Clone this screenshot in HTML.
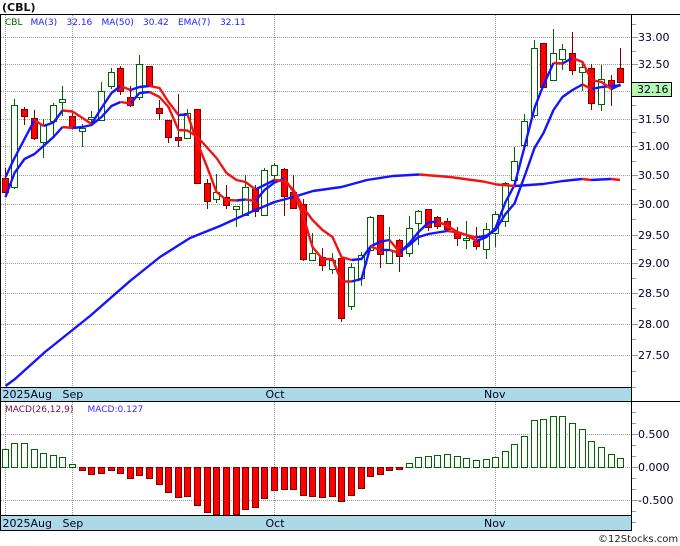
<!DOCTYPE html>
<html><head><meta charset="utf-8"><title>CBL</title>
<style>html,body{margin:0;padding:0;background:#fff;width:680px;height:546px;overflow:hidden}svg{display:block}text{font-family:"DejaVu Sans","Liberation Sans",sans-serif;fill:#00002a}</style></head>
<body>
<svg width="680" height="546" viewBox="0 0 680 546" xmlns="http://www.w3.org/2000/svg">
<rect width="680" height="546" fill="#fff"/>
<g shape-rendering="crispEdges">
<path fill="none" stroke="#999" stroke-dasharray="1 1" d="M1 37.5H632M1 64.5H632M1 91.5H632M1 119.5H632M1 146.5H632M1 175.5H632M1 204.5H632M1 235.5H632M1 263.5H632M1 293.5H632M1 324.5H632M1 355.5H632M1 434.5H632M1 467.5H632M1 500.5H632M5.5 15V387M72.5 15V387M274.5 15V387M495.5 15V387M5.5 402V515M72.5 402V515M274.5 402V515M495.5 402V515"/>
<!-- wicks -->
<path fill="none" stroke="#800000" d="M5.5 168V193M24.5 107V125M34.5 110V140M72.5 113V129M120.5 66V95M130.5 86V107M149.5 66V87M159.5 100V120M168.5 120V143M178.5 94V147M197.5 109V184M207.5 179V209M226.5 185V209M255.5 185V217M284.5 168V216M293.5 175V209M303.5 199V261M322.5 248V271M341.5 258V322M380.5 215V268M399.5 239V272M428.5 209V231M437.5 216V229M447.5 218V232M457.5 227V246M476.5 227V250M543.5 43V88M572.5 32V75M591.5 64V110M611.5 75V106M620.5 48V83"/>
<path fill="none" stroke="#006400" d="M14.5 99V189M43.5 119V158M53.5 103V136M62.5 86V116M82.5 124V147M91.5 111V125M101.5 82V121M111.5 68V89M139.5 55V100M187.5 109V138M216.5 174V203M236.5 206V227M245.5 175V215M264.5 168V215M274.5 163V183M312.5 233V260M332.5 253V274M351.5 263V310M361.5 252V286M370.5 216V250M389.5 227V263M409.5 216V257M418.5 210V245M466.5 221V249M486.5 223V259M495.5 211V247M505.5 182V227M514.5 147V183M524.5 114V147M534.5 40V118M553.5 29V80M562.5 44V70M582.5 61V91M601.5 65V111"/>
<!-- bodies -->
<path fill="#fff" stroke="#006400" d="M11.5 105.5H17.5V187.5H11.5ZM40.5 125.5H46.5V142.5H40.5ZM50.5 105.5H56.5V121.5H50.5ZM59.5 99.5H65.5V102.5H59.5ZM79.5 128.5H85.5V131.5H79.5ZM88.5 117.5H94.5V119.5H88.5ZM98.5 91.5H104.5V120.5H98.5ZM108.5 72.5H114.5V86.5H108.5ZM136.5 64.5H142.5V97.5H136.5ZM184.5 113.5H190.5V138.5H184.5ZM213.5 192.5H219.5V199.5H213.5ZM233.5 206.5H239.5V209.5H233.5ZM242.5 187.5H248.5V215.5H242.5ZM261.5 170.5H267.5V215.5H261.5ZM271.5 165.5H277.5V175.5H271.5ZM309.5 253.5H315.5V260.5H309.5ZM329.5 260.5H335.5V269.5H329.5ZM348.5 267.5H354.5V306.5H348.5ZM358.5 255.5H364.5V278.5H358.5ZM367.5 217.5H373.5V250.5H367.5ZM386.5 250.5H392.5V263.5H386.5ZM406.5 228.5H412.5V253.5H406.5ZM415.5 211.5H421.5V223.5H415.5ZM463.5 238.5H469.5V240.5H463.5ZM483.5 229.5H489.5V249.5H483.5ZM492.5 214.5H498.5V233.5H492.5ZM502.5 183.5H508.5V221.5H502.5ZM511.5 161.5H517.5V180.5H511.5ZM521.5 121.5H527.5V145.5H521.5ZM531.5 48.5H537.5V115.5H531.5ZM550.5 53.5H556.5V80.5H550.5ZM559.5 49.5H565.5V59.5H559.5ZM579.5 67.5H585.5V72.5H579.5ZM598.5 79.5H604.5V104.5H598.5Z"/>
<path fill="#f00" stroke="#800000" d="M2.5 178.5H8.5V192.5H2.5ZM21.5 109.5H27.5V116.5H21.5ZM31.5 118.5H37.5V138.5H31.5ZM69.5 116.5H75.5V128.5H69.5ZM117.5 68.5H123.5V91.5H117.5ZM127.5 97.5H133.5V105.5H127.5ZM146.5 66.5H152.5V86.5H146.5ZM156.5 108.5H162.5V113.5H156.5ZM165.5 120.5H171.5V137.5H165.5ZM175.5 137.5H181.5V140.5H175.5ZM194.5 109.5H200.5V183.5H194.5ZM204.5 183.5H210.5V201.5H204.5ZM223.5 197.5H229.5V205.5H223.5ZM252.5 189.5H258.5V211.5H252.5ZM281.5 169.5H287.5V196.5H281.5ZM290.5 192.5H296.5V208.5H290.5ZM300.5 204.5H306.5V259.5H300.5ZM319.5 257.5H325.5V265.5H319.5ZM338.5 258.5H344.5V318.5H338.5ZM377.5 215.5H383.5V254.5H377.5ZM396.5 240.5H402.5V256.5H396.5ZM425.5 209.5H431.5V227.5H425.5ZM434.5 217.5H440.5V226.5H434.5ZM444.5 221.5H450.5V229.5H444.5ZM454.5 232.5H460.5V238.5H454.5ZM473.5 241.5H479.5V246.5H473.5ZM540.5 43.5H546.5V87.5H540.5ZM569.5 53.5H575.5V70.5H569.5ZM588.5 68.5H594.5V103.5H588.5ZM608.5 80.5H614.5V86.5H608.5ZM617.5 68.5H623.5V82.5H617.5Z"/>
</g>
<!-- moving averages -->
<g fill="none" stroke-width="2.4" stroke-linejoin="round">
<g stroke="#1414ff">
<polyline points="5.5,386 15,379 45,352 90,316 130,281 160,257 190,238 220,226 236.5,218.5 255.5,210 274.5,202 293.5,197 313,191 341.5,187 367,180 393,176 419,174.5"/>
<polyline points="515,186 543,184 563,181 582,179"/>
<polyline points="591,180 611,179"/>
<!-- fast -->
<polyline points="5.5,177 14.5,158 24.5,139 34.5,120"/>
<polyline points="43.5,126 53.5,122.5 62.5,110.5"/>
<polyline points="91.5,124 101.5,108 111.5,93 120.5,86"/>
<polyline points="130.5,90 139.5,87 149.5,86"/>
<polyline points="178.5,115 187.5,114.5"/>
<polyline points="236.5,200.5 245.5,199.5"/>
<polyline points="255.5,201 264.5,190 274.5,182.5 284.5,178.5"/>
<polyline points="351.5,281.5 361.5,279 370.5,246.5"/>
<polyline points="380.5,250 389.5,250"/>
<polyline points="399.5,253 409.5,243 418.5,232 428.5,222.5 437.5,221.5"/>
<polyline points="476.5,241 486.5,237 495.5,228 505.5,202 514.5,185 524.5,147 534.5,108 543.5,85 553.5,63"/>
<polyline points="562.5,63.5 572.5,58"/>
<polyline points="611.5,89 620.5,84.5"/>
<!-- slow -->
<polyline points="5.5,197 14.5,173 24.5,159 34.5,154 43.5,146 53.5,137 62.5,127"/>
<polyline points="72.5,128 82.5,127 91.5,125 101.5,117 111.5,106 120.5,102"/>
<polyline points="130.5,103.5 139.5,93 149.5,92"/>
<polyline points="255.5,189.5 264.5,185 274.5,180"/>
<polyline points="351.5,260 361.5,259 370.5,246.5 380.5,241.5 389.5,240"/>
<polyline points="399.5,252 409.5,245 418.5,237 428.5,234 437.5,232.5 447.5,231"/>
<polyline points="476.5,237.5 486.5,235.5 495.5,230 505.5,214 514.5,203.5 524.5,176.5 534.5,148 543.5,133 553.5,110 562.5,97 572.5,90 582.5,84.5"/>
<polyline points="591.5,89 601.5,87 611.5,86 620.5,85.5"/>
</g>
<g stroke="#f01414">
<polyline points="419,174.5 450,177 483,181.5 497,184.5 515,186"/>
<polyline points="582,179 591,180"/>
<polyline points="611,179 620,180"/>
<!-- fast -->
<polyline points="34.5,120 43.5,126"/>
<polyline points="62.5,110.5 72.5,111.5 82.5,118 91.5,124"/>
<polyline points="120.5,86 130.5,90"/>
<polyline points="149.5,86 159.5,88 168.5,102 178.5,115"/>
<polyline points="187.5,114.5 197.5,143 207.5,168 216.5,192 226.5,200 236.5,200.5"/>
<polyline points="245.5,199.5 255.5,201"/>
<polyline points="284.5,178.5 293.5,192 303.5,217 312.5,247 322.5,259 332.5,259 341.5,281.5 351.5,281.5"/>
<polyline points="370.5,246.5 380.5,250"/>
<polyline points="389.5,250 399.5,253"/>
<polyline points="437.5,221.5 447.5,226 457.5,232 466.5,235 476.5,241"/>
<polyline points="553.5,63 562.5,63.5"/>
<polyline points="572.5,58 582.5,62 591.5,80 601.5,82 611.5,89"/>
<!-- slow -->
<polyline points="62.5,127 72.5,128"/>
<polyline points="120.5,102 130.5,103.5"/>
<polyline points="149.5,92 159.5,97 168.5,107 178.5,130 187.5,130.5 197.5,137 207.5,148 216.5,158 226.5,173 236.5,180 245.5,182 255.5,189.5"/>
<polyline points="274.5,180 284.5,181 293.5,190 303.5,208 312.5,220 322.5,230 332.5,237 341.5,257 351.5,260"/>
<polyline points="389.5,240 399.5,252"/>
<polyline points="447.5,231 457.5,232.5 466.5,235 476.5,237.5"/>
<polyline points="582.5,84.5 591.5,89"/>
</g>
</g>
<!-- cover panels -->
<rect x="0" y="387" width="632" height="14" fill="#add8e6"/>
<rect x="0" y="515" width="632" height="15" fill="#add8e6"/>
<!-- MACD bars -->
<g shape-rendering="crispEdges">
<path fill="#fff" stroke="#006400" d="M2.5 449.5h6V467.5h-6ZM11.5 443.5h6V467.5h-6ZM21.5 443.5h6V467.5h-6ZM31.5 449.5h6V467.5h-6ZM40.5 453.5h6V467.5h-6ZM50.5 455.5h6V467.5h-6ZM59.5 457.5h6V467.5h-6ZM69.5 464.5h6V467.5h-6ZM406.5 463.5h6V467.5h-6ZM415.5 457.5h6V467.5h-6ZM425.5 456.5h6V467.5h-6ZM434.5 455.5h6V467.5h-6ZM444.5 454.5h6V467.5h-6ZM454.5 456.5h6V467.5h-6ZM463.5 458.5h6V467.5h-6ZM473.5 460.5h6V467.5h-6ZM483.5 459.5h6V467.5h-6ZM492.5 457.5h6V467.5h-6ZM502.5 451.5h6V467.5h-6ZM511.5 444.5h6V467.5h-6ZM521.5 436.5h6V467.5h-6ZM531.5 420.5h6V467.5h-6ZM540.5 419.5h6V467.5h-6ZM550.5 416.5h6V467.5h-6ZM559.5 416.5h6V467.5h-6ZM569.5 423.5h6V467.5h-6ZM579.5 429.5h6V467.5h-6ZM588.5 441.5h6V467.5h-6ZM598.5 447.5h6V467.5h-6ZM608.5 454.5h6V467.5h-6ZM617.5 458.5h6V467.5h-6Z"/>
<path fill="#f00" stroke="#800000" d="M79.5 467.5h6V470.5h-6ZM88.5 467.5h6V474.5h-6ZM98.5 467.5h6V473.5h-6ZM108.5 467.5h6V470.5h-6ZM117.5 467.5h6V473.5h-6ZM127.5 467.5h6V478.5h-6ZM136.5 467.5h6V475.5h-6ZM146.5 467.5h6V478.5h-6ZM156.5 467.5h6V484.5h-6ZM165.5 467.5h6V492.5h-6ZM175.5 467.5h6V497.5h-6ZM184.5 467.5h6V496.5h-6ZM194.5 467.5h6V505.5h-6ZM204.5 467.5h6V512.5h-6ZM213.5 467.5h6V514.5h-6ZM223.5 467.5h6V515.5h-6ZM233.5 467.5h6V514.5h-6ZM242.5 467.5h6V509.5h-6ZM252.5 467.5h6V507.5h-6ZM261.5 467.5h6V498.5h-6ZM271.5 467.5h6V490.5h-6ZM281.5 467.5h6V489.5h-6ZM290.5 467.5h6V489.5h-6ZM300.5 467.5h6V495.5h-6ZM309.5 467.5h6V496.5h-6ZM319.5 467.5h6V497.5h-6ZM329.5 467.5h6V496.5h-6ZM338.5 467.5h6V501.5h-6ZM348.5 467.5h6V495.5h-6ZM358.5 467.5h6V488.5h-6ZM367.5 467.5h6V476.5h-6ZM377.5 467.5h6V474.5h-6ZM386.5 467.5h6V470.5h-6ZM396.5 467.5h6V469.5h-6Z"/>
<!-- frame -->
<path fill="none" stroke="#000" d="M0 14.5H680M0 401.5H680M0 387.5H632M0 515.5H632M0 530.5H632M.5 14V531M631.5 14V531"/>
<!-- ticks -->
<path fill="none" stroke="#999" d="M632 37.5H638M632 64.5H638M632 119.5H638M632 146.5H638M632 175.5H638M632 204.5H638M632 235.5H638M632 263.5H638M632 293.5H638M632 324.5H638M632 355.5H638M632 434.5H638M632 467.5H638M632 500.5H638M632 24.5H636M632 51.5H636M632 105.5H636M632 132.5H636M632 161.5H636M632 189.5H636M632 219.5H636M632 249.5H636M632 278.5H636M632 308.5H636M632 339.5H636M632 371.5H636M632 387.5H636M632 412.5H636M632 423.5H636M632 445.5H636M632 456.5H636M632 478.5H636M632 489.5H636M632 511.5H636M632 522.5H636"/>
<!-- last price box -->
<rect x="631.5" y="82.5" width="40" height="14" fill="#b6f8b0" stroke="#000"/>
</g>
<!-- text -->
<text x="2" y="11" font-size="11" font-weight="bold" style="fill:#111">(CBL)</text>
<g font-size="9">
<text x="5" y="25" style="fill:#006400">CBL</text>
<text x="30.5" y="25" style="fill:#2020ff">MA(3)</text>
<text x="66.5" y="25" style="fill:#2020ff">32.16</text>
<text x="101.5" y="25" style="fill:#2020ff">MA(50)</text>
<text x="143" y="25" style="fill:#2020ff">30.42</text>
<text x="178" y="25" style="fill:#2020ff">EMA(7)</text>
<text x="220" y="25" style="fill:#2020ff">32.11</text>
<text x="5" y="412" style="fill:#70104a">MACD(26,12,9)</text>
<text x="87.5" y="412" style="fill:#4a20ff">MACD:0.127</text>
</g>
<g font-size="11">
<text x="638" y="41">33.00</text>
<text x="638" y="68">32.50</text>
<text x="638" y="123">31.50</text>
<text x="638" y="150">31.00</text>
<text x="638" y="179">30.50</text>
<text x="638" y="208">30.00</text>
<text x="638" y="239">29.50</text>
<text x="638" y="267">29.00</text>
<text x="638" y="297">28.50</text>
<text x="638" y="328">28.00</text>
<text x="638" y="359">27.50</text>
<text x="637" y="93">32.16</text>
<text x="638" y="438">0.500</text>
<text x="638" y="471">0.000</text>
<text x="638" y="504">-0.500</text>
<text x="2.5" y="398">2025Aug</text>
<text x="62.5" y="398">Sep</text>
<text x="265.5" y="398">Oct</text>
<text x="484" y="398">Nov</text>
<text x="2.5" y="527">2025Aug</text>
<text x="62.5" y="527">Sep</text>
<text x="265.5" y="527">Oct</text>
<text x="484" y="527">Nov</text>
</g>
<text x="598" y="542" font-size="10" style="fill:#222">©12Stocks.com</text>
</svg>
</body></html>
